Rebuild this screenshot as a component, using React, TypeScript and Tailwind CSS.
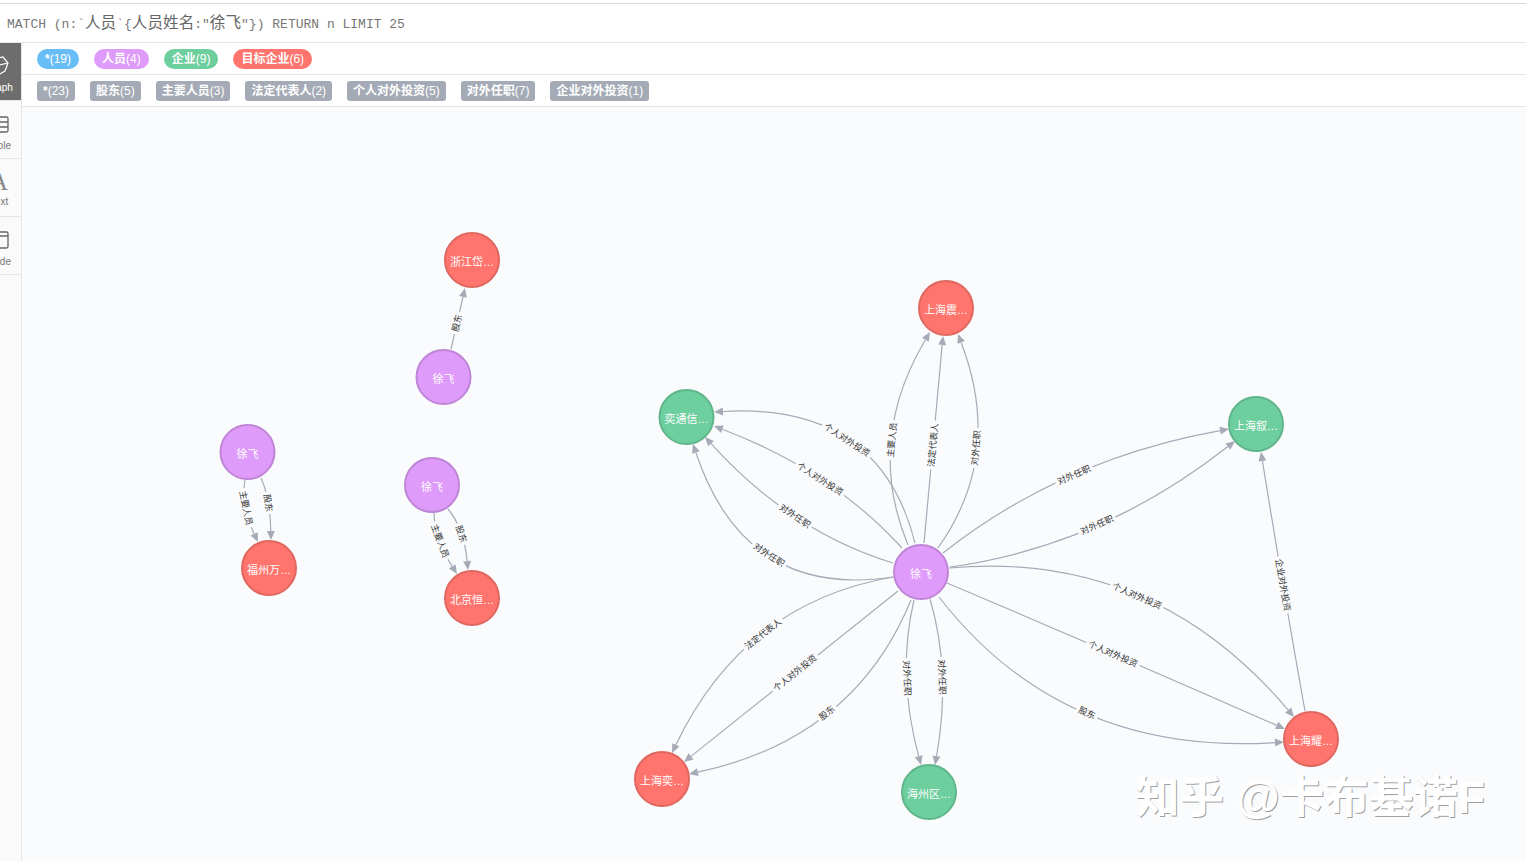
import React from 'react';

type Pt = [number, number];

const MONO = "font-['Liberation_Mono','Noto_Sans_CJK_SC',monospace]";

const nodeLabels = [
  { name: '*', count: '(19)', color: 'bg-[#68bdf6]' },
  { name: '人员', count: '(4)', color: 'bg-[#de9bf9]' },
  { name: '企业', count: '(9)', color: 'bg-[#6dce9e]' },
  { name: '目标企业', count: '(6)', color: 'bg-[#ff756e]' },
];

const relTypes = [
  { name: '*', count: '(23)' },
  { name: '股东', count: '(5)' },
  { name: '主要人员', count: '(3)' },
  { name: '法定代表人', count: '(2)' },
  { name: '个人对外投资', count: '(5)' },
  { name: '对外任职', count: '(7)' },
  { name: '企业对外投资', count: '(1)' },
];

const colors = {
  person: { fill: '#de9bf9', stroke: '#bf85d6' },
  company: { fill: '#6dce9e', stroke: '#60b58b' },
  target: { fill: '#ff756e', stroke: '#e06760' },
};

const nodes: { x: number; y: number; text: string; kind: keyof typeof colors }[] = [
  { x: 472, y: 260, text: '浙江岱…', kind: 'target' },
  { x: 443.5, y: 377, text: '徐飞', kind: 'person' },
  { x: 247.5, y: 452, text: '徐飞', kind: 'person' },
  { x: 269, y: 568, text: '福州万…', kind: 'target' },
  { x: 432, y: 485, text: '徐飞', kind: 'person' },
  { x: 472, y: 598, text: '北京恒…', kind: 'target' },
  { x: 946, y: 308, text: '上海震…', kind: 'target' },
  { x: 686.5, y: 417, text: '奕通信…', kind: 'company' },
  { x: 1256, y: 424, text: '上海叙…', kind: 'company' },
  { x: 921, y: 572, text: '徐飞', kind: 'person' },
  { x: 662, y: 779, text: '上海奕…', kind: 'target' },
  { x: 929, y: 792, text: '海州区…', kind: 'company' },
  { x: 1311, y: 739, text: '上海耀…', kind: 'target' },
];

// start, point on the curve under the label, end
const edges: { s: Pt; m: Pt; e: Pt; label: string }[] = [
  { s: [908, 545], m: [892, 440], e: [930, 332], label: '主要人员' },
  { s: [924, 543], m: [933, 445], e: [943, 336], label: '法定代表人' },
  { s: [938, 548], m: [976, 448], e: [958, 334], label: '对外任职' },
  { s: [915, 543], m: [847, 440], e: [714, 412], label: '个人对外投资' },
  { s: [902, 548], m: [820, 479], e: [714, 426], label: '个人对外投资' },
  { s: [893, 563], m: [795, 516], e: [705, 437], label: '对外任职' },
  { s: [893, 577], m: [769, 555], e: [693, 444], label: '对外任职' },
  { s: [893, 577], m: [763, 634], e: [672, 753], label: '法定代表人' },
  { s: [898, 591], m: [795, 673], e: [684, 762], label: '个人对外投资' },
  { s: [911, 600], m: [827, 713], e: [689, 774], label: '股东' },
  { s: [914, 600], m: [907, 678], e: [921, 765], label: '对外任职' },
  { s: [930, 599], m: [942, 677], e: [935, 765], label: '对外任职' },
  { s: [943, 553], m: [1074, 475], e: [1229, 429], label: '对外任职' },
  { s: [950, 567], m: [1097, 525], e: [1235, 441], label: '对外任职' },
  { s: [949, 568], m: [1137, 596], e: [1294, 717], label: '个人对外投资' },
  { s: [947, 583], m: [1113, 654], e: [1285, 729], label: '个人对外投资' },
  { s: [939, 597], m: [1087, 713], e: [1284, 742], label: '股东' },
  { s: [1305, 711], m: [1283, 585], e: [1261, 452], label: '企业对外投资' },
  { s: [245, 480], m: [246, 508], e: [258, 542], label: '主要人员' },
  { s: [261, 478], m: [268, 503], e: [271, 540], label: '股东' },
  { s: [434, 513], m: [440, 541], e: [457, 574], label: '主要人员' },
  { s: [448, 509], m: [461, 534], e: [468, 570], label: '股东' },
  { s: [451, 349], m: [457, 323], e: [465, 288], label: '股东' },
];

function Edge({ s, m, e, label }: { s: Pt; m: Pt; e: Pt; label: string }) {
  const cx = 2 * m[0] - (s[0] + e[0]) / 2;
  const cy = 2 * m[1] - (s[1] + e[1]) / 2;

  // arrow head points along the last stretch of the curve
  const len = Math.hypot(e[0] - cx, e[1] - cy);
  const ux = (e[0] - cx) / len;
  const uy = (e[1] - cy) / len;
  const bx = e[0] - ux * 9;
  const by = e[1] - uy * 9;
  const head = `${e[0]},${e[1]} ${bx - uy * 4},${by + ux * 4} ${bx + uy * 4},${by - ux * 4}`;

  // keep the label upright
  let angle = (Math.atan2(e[1] - s[1], e[0] - s[0]) * 180) / Math.PI;
  if (e[0] - s[0] < 0) angle += 180;
  const w = label.length * 8.8 + 5;

  return (
    <g>
      <path d={`M${s[0]} ${s[1]} Q${cx} ${cy} ${bx} ${by}`} fill="none" stroke="#a5abb6" strokeWidth={1.2} />
      <polygon points={head} fill="#a5abb6" />
      <g transform={`translate(${m[0]} ${m[1]}) rotate(${angle})`}>
        <rect x={-w / 2} y={-5.5} width={w} height={11} fill="#fafbfd" />
        <text x={0} y={3} textAnchor="middle" fontSize={8.8} fill="#333">
          {label}
        </text>
      </g>
    </g>
  );
}

function GraphCanvas() {
  return (
    <svg
      viewBox="22 107 1504 754"
      className="block h-full w-full font-['Liberation_Sans','Noto_Sans_CJK_SC',sans-serif]"
    >
      {edges.map((edge, i) => (
        <Edge key={i} {...edge} />
      ))}
      {nodes.map((n, i) => (
        <g key={i}>
          <circle cx={n.x} cy={n.y} r={27} fill={colors[n.kind].fill} stroke={colors[n.kind].stroke} strokeWidth={2} />
          <text x={n.x} y={n.y + 5.5} textAnchor="middle" fontSize={11} fill="#fff">
            {n.text}
          </text>
        </g>
      ))}
    </svg>
  );
}

function SideItem({
  label,
  active,
  labelClass,
  children,
}: {
  label: string;
  active?: boolean;
  labelClass?: string;
  children: React.ReactNode;
}) {
  return (
    <div
      className={`flex h-[58px] w-[44px] shrink-0 flex-col items-center border-b border-[#e6e6e6] pt-[11px] text-[10px] leading-3 ${
        active ? 'bg-[#6d6d6d] text-white' : 'text-[#777]'
      }`}
    >
      <div className="flex h-[24px] items-center justify-center">{children}</div>
      <span className={labelClass ?? 'mt-[4px]'}>{label}</span>
    </div>
  );
}

function Sidebar() {
  return (
    <div className="flex w-[22px] shrink-0 justify-end overflow-hidden border-r border-[#e6e6e6] bg-[#fafafa] font-['Liberation_Sans',sans-serif]">
      <div className="flex w-[44px] shrink-0 flex-col">
        <SideItem label="Graph" active>
          <svg width="22" height="22" viewBox="0 0 22 22" fill="none" stroke="currentColor" strokeWidth="1.2">
            <path d="M6 4l9-2 5 6-3 8-7 4-7-5 0-7z" />
            <path d="M6 4l5 6 9-2M11 10l-1 10M11 10l-8 5" />
          </svg>
        </SideItem>
        <SideItem label="Table">
          <svg width="20" height="17" viewBox="0 0 20 17" fill="none" stroke="#666" strokeWidth="1.3">
            <rect x="1" y="1" width="18" height="15" rx="1.5" />
            <path d="M1 6h18M1 11h18" />
          </svg>
        </SideItem>
        <SideItem label="Text" labelClass="mt-[2px]">
          <span className="font-['Liberation_Serif',serif] text-[25px] leading-6 text-[#888]">A</span>
        </SideItem>
        <SideItem label="Code">
          <svg width="20" height="18" viewBox="0 0 20 18" fill="none" stroke="#666" strokeWidth="1.3">
            <rect x="1" y="1" width="18" height="16" rx="1.5" />
            <path d="M1 5h18M4 13h5" />
          </svg>
        </SideItem>
      </div>
    </div>
  );
}

export default function App() {
  return (
    <div className="flex h-[861px] w-[1526px] flex-col overflow-hidden bg-white">
      <div className="h-[4px] shrink-0 border-b border-[#d9d9d9]" />

      {/* Query bar */}
      <div
        className={`flex h-[39px] shrink-0 items-center whitespace-pre border-b border-[#e6e6e6] pl-[7px] pt-[4px] text-[13px] text-[#777] ${MONO}`}
      >
        MATCH (n:`<span className="text-[15.6px] text-[#666]">人员</span>`{'{'}
        <span className="text-[15.6px] text-[#666]">人员姓名</span>:"<span className="text-[15.6px] text-[#666]">徐飞</span>
        "{'}'}) RETURN n LIMIT 25
      </div>

      <div className="flex min-h-0 flex-1">
        <Sidebar />
        <div className="flex min-w-0 flex-1 flex-col font-['Liberation_Sans','Noto_Sans_CJK_SC',sans-serif]">
          {/* Node labels */}
          <div className="flex h-[32px] shrink-0 items-center gap-[15px] border-b border-[#e6e6e6] pl-[15px]">
            {nodeLabels.map((l) => (
              <span key={l.name} className={`flex h-[20px] items-center rounded-full px-[8px] text-xs text-white ${l.color}`}>
                <span className="font-semibold">{l.name}</span>
                {l.count}
              </span>
            ))}
          </div>

          {/* Relationship types */}
          <div className="flex h-[32px] shrink-0 items-center gap-[15px] border-b border-[#e6e6e6] pl-[15px]">
            {relTypes.map((t) => (
              <span key={t.name} className="flex h-[20px] items-center rounded-[3px] bg-[#a5abb6] px-[6px] text-xs text-white">
                <span className="font-semibold">{t.name}</span>
                {t.count}
              </span>
            ))}
          </div>

          <div className="relative min-h-0 flex-1 bg-[#fafbfd]">
            <GraphCanvas />
            {/* Watermark */}
            <div className="absolute left-[1113px] top-[665px] whitespace-nowrap text-[44.5px] font-semibold leading-[52px] text-white [text-shadow:1px_1px_0_#a0a0a0]">
              知乎 @卡布基诺F
            </div>
          </div>
        </div>
      </div>
    </div>
  );
}
